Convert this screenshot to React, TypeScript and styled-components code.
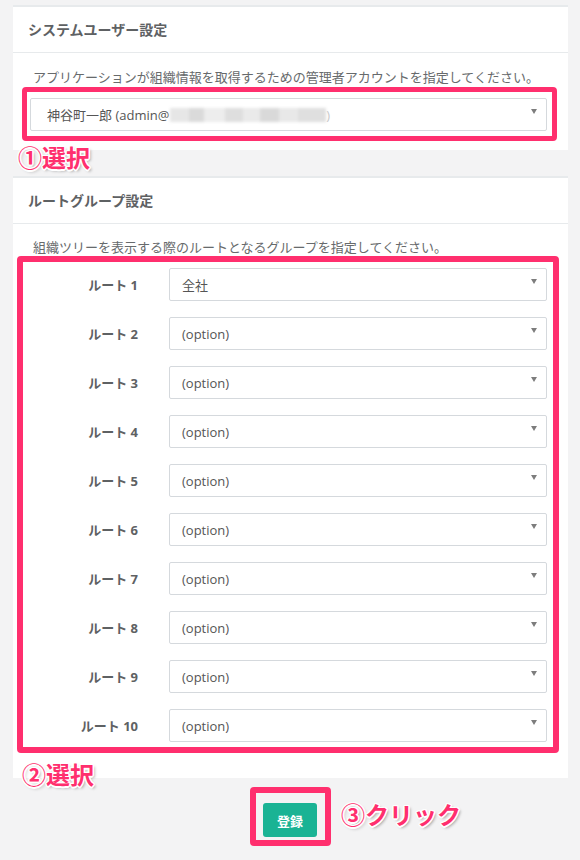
import React from 'react'

import styled, { createGlobalStyle } from 'styled-components'

const pink = '#ff2f6e'

const GlobalStyle = createGlobalStyle`
  body {
    margin: 0;
    background: #f3f3f4;
    font-family: 'Open Sans', 'Noto Sans CJK JP', sans-serif;
    color: #676a6c;
  }
`

const Page = styled.div`
  padding: 5px 12px 20px 13px;
`

const Panel = styled.section`
  background: #fff;
  border-top: 2px solid #e7eaec;

  & + & {
    margin-top: 26px;
  }
`

const PanelTitle = styled.h5`
  margin: 0;
  height: 45px;
  line-height: 45px;
  padding: 0 15px;
  font-size: 14px;
  font-weight: 700;
  color: #5e6163;
  border-bottom: 1px solid #e7eaec;
  overflow: hidden;
`

const PanelBody = styled.div<{ $top: number }>`
  display: flow-root;
  padding: ${({ $top }) => $top}px 20px 0 20px;
`

const Hint = styled.p`
  margin: 0;
  height: 18px;
  font-size: 13px;
  line-height: 18px;
  color: #676a6c;
  white-space: nowrap;
`

const Highlight = styled.div<{ $width: number; $margin: string; $padding: string }>`
  border: ${({ $width }) => $width}px solid ${pink};
  border-radius: 4px;
  margin: ${({ $margin }) => $margin};
  padding: ${({ $padding }) => $padding};
`

const SelectBox = styled.div<{ $inset: number }>`
  display: flex;
  height: 33px;
  box-sizing: border-box;
  border: 1px solid #d5d9dd;
  border-radius: 2px;
  background: #fff;
  padding: 0 9px 0 ${({ $inset }) => $inset}px;
  font-size: 13px;
  color: #555;
`

const SelectValue = styled.span`
  flex: 1;
  display: flex;
  align-items: center;
  white-space: nowrap;
`

const Caret = styled.span`
  margin-top: 10px;
  width: 0;
  height: 0;
  border-left: 3.5px solid transparent;
  border-right: 3.5px solid transparent;
  border-top: 5px solid #7d7d7d;
`

const Blurred = styled.span`
  display: inline-block;
  width: 156px;
  height: 14px;
  margin-left: 1px;
  background: linear-gradient(
    90deg,
    #e6e6e6 0 12%,
    #dadada 12% 22%,
    #ededed 22% 35%,
    #dedede 35% 47%,
    #eaeaea 47% 58%,
    #d9d9d9 58% 70%,
    #e8e8e8 70% 82%,
    #dfdfdf 82% 100%
  );
  filter: blur(1.5px);
`

const Faint = styled.span`
  color: #c8c8c8;
`

const RowList = styled.div`
  display: grid;
  row-gap: 16px;
`

const Row = styled.div`
  display: grid;
  grid-template-columns: 146px 1fr;
  align-items: center;
`

const RowLabel = styled.label`
  text-align: right;
  padding-right: 31px;
  font-size: 13px;
  font-weight: 700;
  color: #5e6163;
`

const Callout = styled.div<{ $margin: string }>`
  margin: ${({ $margin }) => $margin};
  height: 24px;
  font-size: 24px;
  line-height: 24px;
  font-weight: 700;
  color: ${pink};
  white-space: nowrap;
  text-shadow:
    1.5px 0 0 #fff,
    -1.5px 0 0 #fff,
    0 1.5px 0 #fff,
    0 -1.5px 0 #fff,
    1px 1px 0 #fff,
    -1px -1px 0 #fff,
    1px -1px 0 #fff,
    -1px 1px 0 #fff,
    2px 2px 3px rgba(0, 0, 0, 0.35);
`

const Footer = styled.div`
  display: flex;
  align-items: center;
  gap: 10px;
  margin-top: 9px;
  padding-left: 237px;
`

const SubmitButton = styled.button`
  display: block;
  width: 54px;
  height: 34px;
  border: none;
  border-radius: 3px;
  background: #1ab394;
  color: #fff;
  font-family: inherit;
  font-size: 13px;
  font-weight: 700;
  padding: 0;
`

const roots = [
  '全社',
  '(option)',
  '(option)',
  '(option)',
  '(option)',
  '(option)',
  '(option)',
  '(option)',
  '(option)',
  '(option)',
]

export default function App() {
  return (
    <>
      <GlobalStyle />
      <Page>
        <Panel>
          <PanelTitle>システムユーザー設定</PanelTitle>
          <PanelBody $top={15}>
            <Hint>アプリケーションが組織情報を取得するための管理者アカウントを指定してください。</Hint>
            <Highlight $width={5} $margin="1px -9px 0 -11px" $padding="6px 5px 5px 3px">
              <SelectBox $inset={16}>
                <SelectValue>
                  神谷町一郎 (admin@
                  <Blurred />
                  <Faint>)</Faint>
                </SelectValue>
                <Caret />
              </SelectBox>
            </Highlight>
            <Callout $margin="5px 0 -20px -15px">①選択</Callout>
          </PanelBody>
        </Panel>

        <Panel>
          <PanelTitle>ルートグループ設定</PanelTitle>
          <PanelBody $top={14}>
            <Hint>組織ツリーを表示する際のルートとなるグループを指定してください。</Hint>
            <Highlight $width={6} $margin="0 -11px 0 -16px" $padding="6px 6px 5px 0">
              <RowList>
                {roots.map((value, i) => (
                  <Row key={i}>
                    <RowLabel>ルート {i + 1}</RowLabel>
                    <SelectBox $inset={12}>
                      <SelectValue>{value}</SelectValue>
                      <Caret />
                    </SelectBox>
                  </Row>
                ))}
              </RowList>
            </Highlight>
            <Callout $margin="10px 0 -9px -11px">②選択</Callout>
          </PanelBody>
        </Panel>

        <Footer>
          <Highlight $width={6} $margin="0" $padding="10px 8px 3px 7px">
            <SubmitButton>登録</SubmitButton>
          </Highlight>
          <Callout $margin="-4px 0 0 0">③クリック</Callout>
        </Footer>
      </Page>
    </>
  )
}
